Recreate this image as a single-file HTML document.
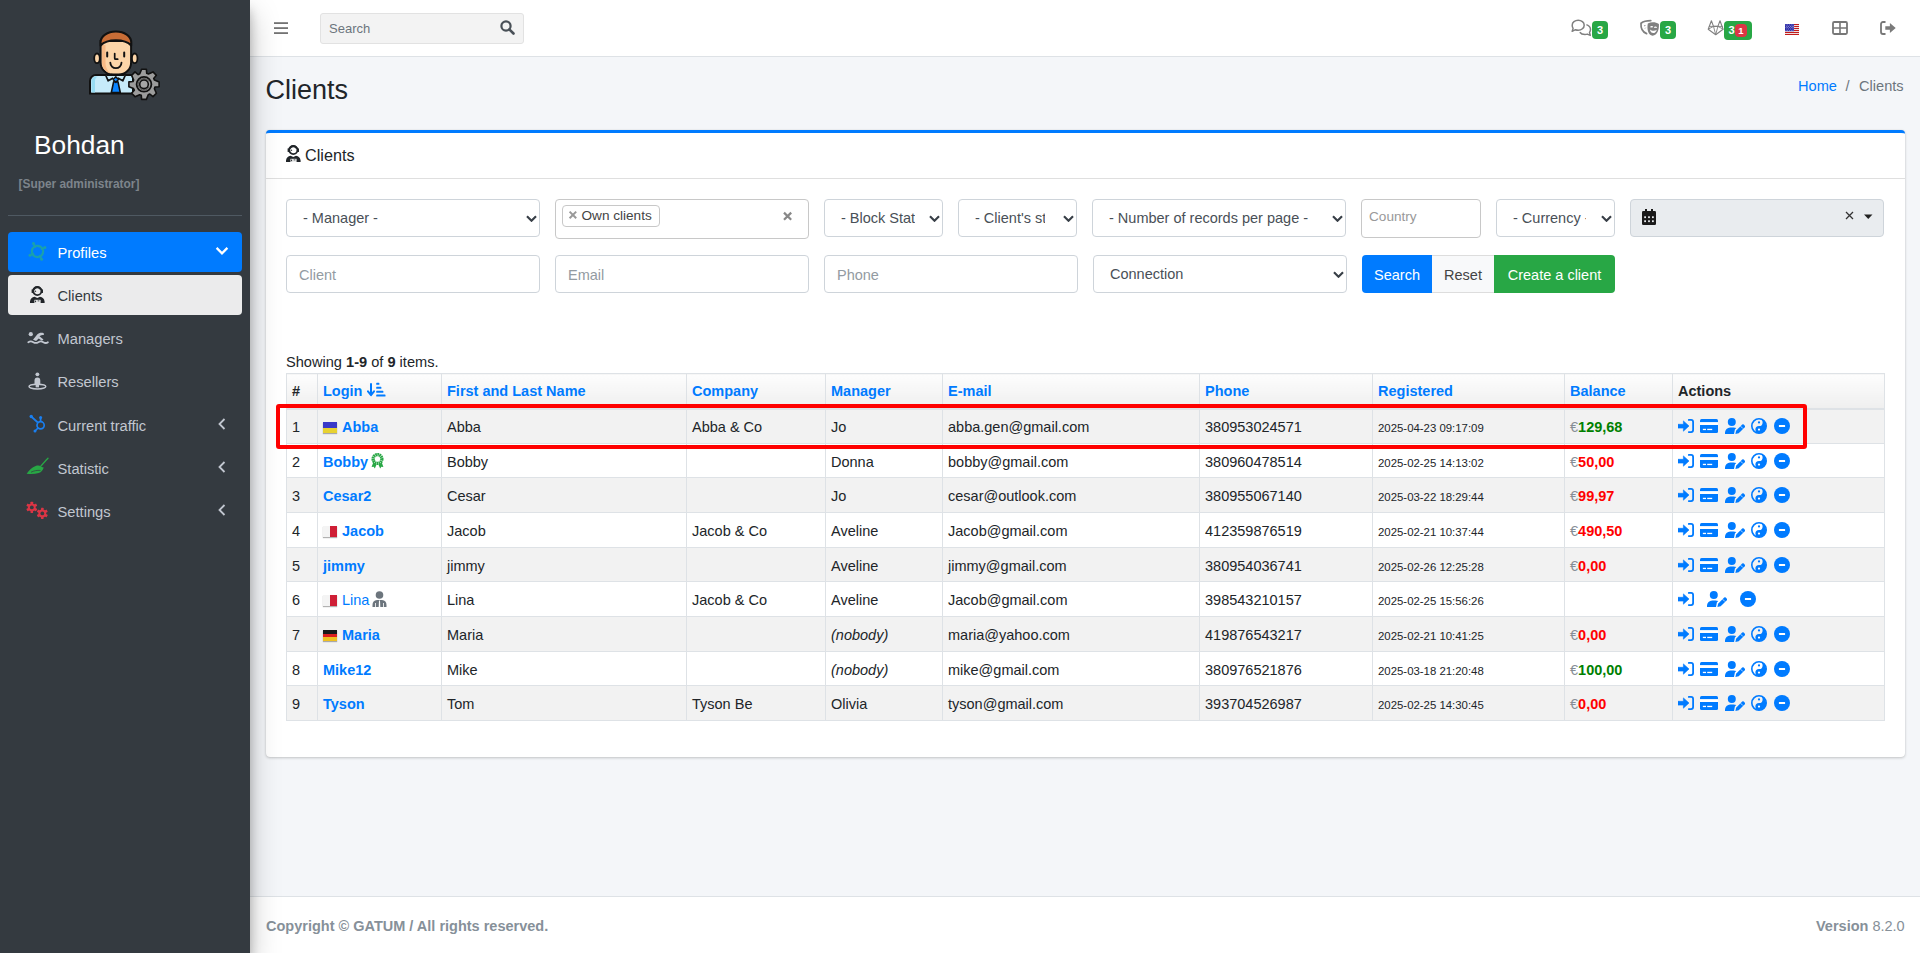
<!DOCTYPE html><html><head><meta charset="utf-8"><title>Clients</title><style>
*{box-sizing:border-box}
html,body{margin:0;padding:0}
body{width:1920px;height:953px;overflow:hidden;background:#f4f6f9;font-family:"Liberation Sans",sans-serif;color:#212529;position:relative;font-size:14.5px}
.a{position:absolute;white-space:nowrap}
#sidebar{position:absolute;left:0;top:0;width:250px;height:953px;background:#343a40;z-index:10;box-shadow:0 14px 28px rgba(0,0,0,.25),0 10px 10px rgba(0,0,0,.22)}
#navbar{position:absolute;left:250px;top:0;width:1670px;height:57px;background:#fff;border-bottom:1px solid #dee2e6}
#footer{position:absolute;left:250px;top:896px;width:1670px;height:57px;background:#fff;border-top:1px solid #dee2e6;color:#869099}
.ni{position:absolute;left:8px;width:234px;height:40px;border-radius:4px;color:#c2c7d0;font-size:14.7px}
.ni .t{position:absolute;left:49.5px;top:13px;line-height:16px;white-space:nowrap}
.ni svg{position:absolute}
.card{position:absolute;left:266px;top:130px;width:1639px;height:627px;background:#fff;border-top:3px solid #007bff;border-radius:4px;box-shadow:0 0 1px rgba(0,0,0,.125),0 1px 3px rgba(0,0,0,.2)}
.fc{position:absolute;height:38px;border:1px solid #ced4da;border-radius:4px;background:#fff;color:#495057;font-size:14.5px;white-space:nowrap;overflow:hidden}
.fc .t{position:absolute;top:10px;line-height:16px}
.ph{color:#939ba2}
.chev{position:absolute;top:15px}
table.grid{position:absolute;left:286px;top:373px;width:1599px;border-collapse:collapse;table-layout:fixed;font-size:14.5px}
.grid td,.grid th{border:1px solid #dee2e6;padding:2px 0 0 5px;height:34.68px;white-space:nowrap;overflow:hidden;text-align:left;vertical-align:middle}
.grid th{height:35px;padding-top:0;border-bottom:2px solid #dee2e6;background:linear-gradient(#fdfdfd,#efefef);font-weight:bold;color:#007bff}
.grid th.k{color:#212529}
.grid tr.s td{background:#f2f2f2}
.grid a{color:#007bff;text-decoration:none;font-weight:bold}
.grid a.n{font-weight:normal}
.flag{display:inline-block;width:14px;height:11px;vertical-align:-1px;margin-right:5px;box-shadow:0 1px 1px rgba(0,0,0,.3)}
.reg{font-size:11.4px}
.eu{color:#868e96}
.gr{color:#008000;font-weight:bold}
.rd{color:#ff0000;font-weight:bold}
.acts svg{vertical-align:middle;position:relative;top:-1.4px}
.badge{position:absolute;background:#28a745;color:#fff;font-weight:bold;font-size:10.5px;border-radius:4px;text-align:center;line-height:18px}
</style></head><body><svg width="0" height="0" style="position:absolute"><defs>
<symbol id="i-signin" viewBox="0 0 16 14"><path d="M10.8 .9h2.3a2 2 0 0 1 2 2v8.2a2 2 0 0 1-2 2h-2.3" fill="none" stroke="#007bff" stroke-width="1.8" stroke-linecap="round"/><path d="M0 5.3h5.4V1.9L11 7l-5.6 5.2V9.1H0z" fill="#007bff" stroke="#007bff" stroke-width=".6" stroke-linejoin="round"/></symbol>
<symbol id="i-card" viewBox="0 0 18 14"><rect x="0" y="0" width="18" height="14" rx="1.5" fill="#007bff"/><rect x="0" y="3.1" width="18" height="2.9" fill="#fff"/><rect x="2.85" y="9.8" width="3.15" height="1.3" fill="#fff"/><rect x="7.2" y="9.8" width="5" height="1.3" fill="#fff"/></symbol>
<symbol id="i-uedit" viewBox="0 0 20 16"><circle cx="6.8" cy="4.1" r="4" fill="#007bff"/><path d="M0 16v-1.4A5.2 5.2 0 0 1 5.2 9.4h3.4a5.2 5.2 0 0 1 2.6.7L9.9 11.4l-.9 4.6z" fill="#007bff"/><path d="M10.4 16l.7-3.3 6.1-6.1a1.1 1.1 0 0 1 1.55 0l1.05 1.05a1.1 1.1 0 0 1 0 1.55L13.7 15.3z" fill="#007bff"/><path d="M15.6 8.2l2.3 2.3" stroke="#fff" stroke-width=".7"/></symbol>
<symbol id="i-yy" viewBox="0 0 16 16"><circle cx="8" cy="8" r="7.2" fill="none" stroke="#007bff" stroke-width="1.6"/><path d="M8 0.8a7.2 7.2 0 0 1 0 14.4a3.6 3.6 0 0 1 0-7.2a3.6 3.6 0 0 0 0-7.2z" fill="#007bff"/><circle cx="8" cy="4.4" r="1.1" fill="#007bff"/><circle cx="8" cy="11.6" r="1.1" fill="#fff"/></symbol>
<symbol id="i-minus" viewBox="0 0 16 16"><circle cx="8" cy="8" r="8" fill="#007bff"/><rect x="4.9" y="6.95" width="6.2" height="2.1" rx=".4" fill="#fff"/></symbol>
<symbol id="i-chev" viewBox="0 0 11 7"><path d="M1 1.2l4.5 4.5 4.5-4.5" fill="none" stroke="#3a4149" stroke-width="2.2"/></symbol>
<symbol id="i-client" viewBox="0 0 16 18"><circle cx="7.3" cy="5" r="4.1" fill="none" stroke="#212529" stroke-width="1.8"/><path d="M3.6 3.4A4.3 4.3 0 0 1 11 3.4" fill="none" stroke="#212529" stroke-width="2"/><rect x="1.6" y="3.2" width="1.4" height="3.8" rx=".6" fill="#212529"/><rect x="11.6" y="3.2" width="1.4" height="3.8" rx=".6" fill="#212529"/><path d="M4.8 4.3l1.6 1-1.6 1z" fill="#212529"/><path d="M0 17v-1.6A5.6 5.6 0 0 1 4.6 10.8l2.7 1.3 2.7-1.3a5.6 5.6 0 0 1 4.6 4.6V17z" fill="#212529"/><rect x="4.4" y="13.8" width="6.2" height="3.2" fill="#eceded"/><rect x="5.1" y="14.6" width="1" height="1.6" fill="#212529"/><rect x="7.6" y="14.5" width="1.8" height=".8" fill="#212529"/></symbol>
</defs></svg><div id="navbar"></div>
<svg class="a" style="left:274px;top:21px" width="14" height="14"><rect y="1.2" width="14" height="1.8" fill="#737373"/><rect y="6.2" width="14" height="1.8" fill="#737373"/><rect y="11.2" width="14" height="1.8" fill="#737373"/></svg>
<div class="a" style="left:320px;top:13px;width:204px;height:31px;background:#f3f3f3;border:1px solid #e2e2e2;border-radius:3px"></div>
<div class="a" style="left:329px;top:20.7px;font-size:13px;line-height:16px;color:#6c757d">Search</div>
<svg class="a" style="left:500px;top:20px" width="15" height="15"><circle cx="6" cy="6" r="4.6" fill="none" stroke="#495057" stroke-width="2.2"/><path d="M9.3 9.3l4.2 4.2" stroke="#495057" stroke-width="2.6" stroke-linecap="round"/></svg>
<svg class="a" style="left:1568px;top:16px" width="24" height="22"><path d="M10.2 4.2c3.3 0 6 2.2 6 5s-2.7 5-6 5c-1 0-1.9-.2-2.7-.5L4.2 15.3l.9-2.9C4.5 11.6 4.2 10.5 4.2 9.2c0-2.8 2.7-5 6-5z" fill="none" stroke="#808080" stroke-width="1.5" stroke-linejoin="round"/><path d="M18.4 8.6c2.4.8 4.1 2.7 4.1 4.9 0 1.1-.4 2.1-1 2.9l.8 3-3-1.3c-.7.2-1.5.3-2.3.3-2.2 0-4.2-.8-5.2-2.2" fill="none" stroke="#808080" stroke-width="1.5" stroke-linejoin="round"/></svg>
<div class="badge" style="left:1592px;top:21px;width:16px;height:18px;font-size:11px">3</div>
<svg class="a" style="left:1636px;top:16px" width="24" height="22"><path d="M5 7.2C7.5 5.3 11 4.6 14.8 4.6M5 7.2c-.3 4.2 1 8.6 5.6 10.4" fill="none" stroke="#808080" stroke-width="1.7" stroke-linecap="round"/><path d="M8.2 9.8l1.2-.3M9.1 12.4l.5-.6" stroke="#808080" stroke-width="1"/><path d="M11.8 7.4c3.4-1.8 7.9-1.7 11.1.6.4 5.9-1.5 10.9-6.3 11.8-4.3-.9-5.9-6.2-4.8-12.4z" fill="#808080"/><path d="M14.6 11.4c.5-.9 1.6-1 2.2-.2M18.3 11.6c.6-.8 1.8-.7 2.3.1" fill="none" stroke="#fff" stroke-width="1.2"/><path d="M13.9 13.5c1.8 1.6 5 1.9 6.9.2-.6 2.2-2.1 3.4-3.6 3.4-1.6 0-2.9-1.3-3.3-3.6z" fill="#fff"/></svg>
<div class="badge" style="left:1660px;top:21px;width:16px;height:18px;font-size:11px">3</div>
<svg class="a" style="left:1704px;top:16px" width="20" height="22"><path d="M11.7 18.7L4.2 13.2 7.4 4.7l2.1 5.7h4.4l2.1-5.7 3.1 8.5z" fill="none" stroke="#808080" stroke-width="1.1" stroke-linejoin="round"/><path d="M4.9 10.4h13.9M9.5 10.4l2.2 8.3 2.2-8.3M4.2 13.2l5.3-2.8M19.2 13.2l-5.3-2.8" fill="none" stroke="#808080" stroke-width=".9"/></svg>
<div class="badge" style="left:1724px;top:21px;width:28px;height:19px;text-align:left;padding-left:4.5px;font-size:11px;line-height:19px">3</div>
<div class="a" style="left:1735px;top:24px;width:12px;height:13px;background:#dc3545;border-radius:4px;color:#fff;font-weight:bold;font-size:9.5px;line-height:13px;text-align:center">1</div>
<svg class="a" style="left:1785px;top:24px" width="14" height="11"><rect width="14" height="11" fill="#f4f4f4"/><rect y="0" width="14" height="1.1" fill="#c21b1b"/><rect y="2" width="14" height="1.1" fill="#c21b1b"/><rect y="4" width="14" height="1.1" fill="#c21b1b"/><rect y="6" width="14" height="1.1" fill="#c21b1b"/><rect y="8" width="14" height="1.1" fill="#c21b1b"/><rect y="10" width="14" height="1.1" fill="#c21b1b"/><rect width="9" height="7.2" fill="#2a2aa8"/><circle cx="1.00" cy="0.90" r=".42" fill="#fff"/><circle cx="2.75" cy="0.90" r=".42" fill="#fff"/><circle cx="4.50" cy="0.90" r=".42" fill="#fff"/><circle cx="6.25" cy="0.90" r=".42" fill="#fff"/><circle cx="8.00" cy="0.90" r=".42" fill="#fff"/><circle cx="1.87" cy="2.25" r=".42" fill="#fff"/><circle cx="3.62" cy="2.25" r=".42" fill="#fff"/><circle cx="5.37" cy="2.25" r=".42" fill="#fff"/><circle cx="7.12" cy="2.25" r=".42" fill="#fff"/><circle cx="8.87" cy="2.25" r=".42" fill="#fff"/><circle cx="1.00" cy="3.60" r=".42" fill="#fff"/><circle cx="2.75" cy="3.60" r=".42" fill="#fff"/><circle cx="4.50" cy="3.60" r=".42" fill="#fff"/><circle cx="6.25" cy="3.60" r=".42" fill="#fff"/><circle cx="8.00" cy="3.60" r=".42" fill="#fff"/><circle cx="1.87" cy="4.95" r=".42" fill="#fff"/><circle cx="3.62" cy="4.95" r=".42" fill="#fff"/><circle cx="5.37" cy="4.95" r=".42" fill="#fff"/><circle cx="7.12" cy="4.95" r=".42" fill="#fff"/><circle cx="8.87" cy="4.95" r=".42" fill="#fff"/><circle cx="1.00" cy="6.30" r=".42" fill="#fff"/><circle cx="2.75" cy="6.30" r=".42" fill="#fff"/><circle cx="4.50" cy="6.30" r=".42" fill="#fff"/><circle cx="6.25" cy="6.30" r=".42" fill="#fff"/><circle cx="8.00" cy="6.30" r=".42" fill="#fff"/></svg>
<svg class="a" style="left:1832px;top:21px" width="16" height="14"><rect x="1" y="1" width="14" height="12" rx="1.2" fill="none" stroke="#777" stroke-width="1.8"/><path d="M8 1v12M1 7h14" stroke="#777" stroke-width="1.6"/></svg>
<svg class="a" style="left:1880px;top:21px" width="16" height="14"><path d="M5.5 1H3A2 2 0 0 0 1 3v8a2 2 0 0 0 2 2h2.5" fill="none" stroke="#777" stroke-width="1.8"/><path d="M5.3 5.3h4.6V2l5.8 5-5.8 5V8.8H5.3z" fill="#7a7a7a"/></svg>
<div class="a" style="left:265.5px;top:74px;font-size:27px;line-height:32px;color:#212529">Clients</div>
<div class="a" style="left:1798px;top:78px;font-size:14.6px;line-height:16px;color:#6c757d"><span style="color:#007bff">Home</span><span style="padding:0 9.5px 0 8.5px">/</span>Clients</div>
<div class="card"></div>
<div class="a" style="left:266px;top:178px;width:1639px;height:1px;background:rgba(0,0,0,.125)"></div>
<svg class="a" style="left:286px;top:145px" width="16" height="18" ><use href="#i-client"/></svg>
<div class="a" style="left:305px;top:146px;font-size:16.2px;line-height:18px;color:#212529">Clients</div>
<div class="fc" style="left:286px;top:199px;width:254px"><span class="t" style="left:16px">- Manager -</span><svg class="chev" style="left:239px" width="11" height="7"><use href="#i-chev"/></svg></div>
<div class="fc" style="left:555px;top:199px;width:254px;height:39.5px;border-color:#c8c8c8"></div>
<div class="a" style="left:562px;top:205px;width:98px;height:22px;background:#fff;border:1px solid #c8c8c8;border-radius:4px;font-size:13.6px;line-height:20px;color:#444;padding-left:18.5px">Own clients</div>
<svg class="a" style="left:568px;top:210px" width="10" height="10"><path d="M1.6 1.6l6.6 6.6M8.2 1.6L1.6 8.2" stroke="#999" stroke-width="2"/></svg>
<svg class="a" style="left:782px;top:211px" width="12" height="11"><path d="M2 1.6l7.2 7.2M9.2 1.6L2 8.8" stroke="#888" stroke-width="2.2"/></svg>
<div class="fc" style="left:824px;top:199px;width:119px"><span class="t" style="left:16px;width:74px;overflow:hidden">- Block Status -</span><svg class="chev" style="left:104px" width="11" height="7"><use href="#i-chev"/></svg></div>
<div class="fc" style="left:958px;top:199px;width:119px"><span class="t" style="left:16px;width:70px;overflow:hidden">- Client's status -</span><svg class="chev" style="left:104px" width="11" height="7"><use href="#i-chev"/></svg></div>
<div class="fc" style="left:1092px;top:199px;width:254px"><span class="t" style="left:16px">- Number of records per page -</span><svg class="chev" style="left:239px" width="11" height="7"><use href="#i-chev"/></svg></div>
<div class="fc" style="left:1361px;top:199px;width:120px;height:39px;border-color:#c8c8c8"><span class="t" style="left:7px;top:9px;color:#999;font-size:13.6px">Country</span></div>
<div class="fc" style="left:1496px;top:199px;width:119px"><span class="t" style="left:16px;width:73px;overflow:hidden">- Currency -</span><svg class="chev" style="left:104px" width="11" height="7"><use href="#i-chev"/></svg></div>
<div class="fc" style="left:1630px;top:199px;width:254px;height:38px;background:#e9ecef"></div>
<svg class="a" style="left:1642px;top:209px" width="14" height="16"><rect x="0" y="2" width="14" height="14" rx="1.3" fill="#1a1a1a"/><rect x="3" y="0" width="2" height="4" fill="#1a1a1a"/><rect x="9" y="0" width="2" height="4" fill="#1a1a1a"/><rect x="2.2" y="7.3" width="1.8" height="1.8" fill="#e9ecef"/><rect x="2.2" y="11.3" width="1.8" height="1.8" fill="#e9ecef"/><rect x="6.1" y="7.3" width="1.8" height="1.8" fill="#e9ecef"/><rect x="6.1" y="11.3" width="1.8" height="1.8" fill="#e9ecef"/><rect x="10.0" y="7.3" width="1.8" height="1.8" fill="#e9ecef"/><rect x="10.0" y="11.3" width="1.8" height="1.8" fill="#e9ecef"/></svg>
<svg class="a" style="left:1845px;top:211px" width="9" height="9"><path d="M1 1l7 7M8 1L1 8" stroke="#333" stroke-width="1.3"/></svg>
<svg class="a" style="left:1864px;top:214px" width="9" height="6"><path d="M0 0.5h8.5L4.25 5z" fill="#222"/></svg>
<div class="fc" style="left:286px;top:255px;width:254px"><span class="t ph" style="left:12px;top:11px">Client</span></div>
<div class="fc" style="left:555px;top:255px;width:254px"><span class="t ph" style="left:12px;top:11px">Email</span></div>
<div class="fc" style="left:824px;top:255px;width:254px"><span class="t ph" style="left:12px;top:11px">Phone</span></div>
<div class="fc" style="left:1093px;top:255px;width:254px"><span class="t" style="left:16px">Connection</span><svg class="chev" style="left:239px" width="11" height="7"><use href="#i-chev"/></svg></div>
<div class="a" style="left:1362px;top:255px;width:70px;height:38px;background:#007bff;border-radius:4px 0 0 4px;color:#fff;font-size:14.5px;line-height:40px;text-align:center">Search</div>
<div class="a" style="left:1432px;top:255px;width:62px;height:38px;background:#f8f9fa;border:1px solid #ddd;border-left:0;border-right:0;color:#444;font-size:14.5px;line-height:38px;text-align:center">Reset</div>
<div class="a" style="left:1494px;top:255px;width:121px;height:38px;background:#28a745;border-radius:0 4px 4px 0;color:#fff;font-size:14.5px;line-height:40px;text-align:center">Create a client</div>
<div class="a" style="left:286px;top:353px;font-size:14.6px;line-height:18px">Showing <b>1-9</b> of <b>9</b> items.</div>
<table class="grid"><colgroup><col style="width:31px"><col style="width:124px"><col style="width:245px"><col style="width:139px"><col style="width:117px"><col style="width:257px"><col style="width:173px"><col style="width:192px"><col style="width:108px"><col style="width:212px"></colgroup><tr><th class="k">#</th><th class="">Login <svg width="19" height="15" style="vertical-align:-1.2px;margin-left:0px"><path d="M4 1.2v11.5" stroke="#007bff" stroke-width="2"/><path d="M1 9.4l3 3.7 3-3.7" fill="none" stroke="#007bff" stroke-width="2" stroke-linecap="round" stroke-linejoin="round"/><g fill="#007bff"><rect x="9.2" y=".8" width="3.2" height="2" rx=".6"/><rect x="9.2" y="4.8" width="5.2" height="2" rx=".6"/><rect x="9.2" y="8.8" width="7.2" height="2" rx=".6"/><rect x="9.2" y="12.6" width="9.3" height="2" rx=".6"/></g></svg></th><th class="">First and Last Name</th><th class="">Company</th><th class="">Manager</th><th class="">E-mail</th><th class="">Phone</th><th class="">Registered</th><th class="">Balance</th><th class="k">Actions</th></tr><tr class="s"><td>1</td><td><span class="flag" style="background:linear-gradient(#3a3ac8 50%,#e8d230 50%)"></span><a>Abba</a></td><td>Abba</td><td>Abba &amp; Co</td><td>Jo</td><td>abba.gen@gmail.com</td><td>380953024571</td><td><span class="reg">2025-04-23 09:17:09</span></td><td><span class="eu">&#8364;</span><span class="gr">129,68</span></td><td class=acts><svg width="16" height="14"><use href="#i-signin"/></svg><span style="display:inline-block;width:5.5px"></span><svg width="18" height="14"><use href="#i-card"/></svg><span style="display:inline-block;width:7px"></span><svg width="20" height="16"><use href="#i-uedit"/></svg><span style="display:inline-block;width:6px"></span><svg width="16" height="16"><use href="#i-yy"/></svg><span style="display:inline-block;width:7px"></span><svg width="16" height="16"><use href="#i-minus"/></svg></td></tr><tr class=""><td>2</td><td><a>Bobby</a><svg width="14" height="17" style="vertical-align:0.5px;margin:-4px 0 -4px 3px"><circle cx="6.5" cy="6" r="4.4" fill="none" stroke="#28a745" stroke-width="3.3" stroke-dasharray="1.6 .4"/><path d="M2.2 9.6L.6 14l2.1-.3 1.1 1.9 1.8-4.2zM10.8 9.6l1.6 4.4-2.1-.3-1.1 1.9-1.8-4.2z" fill="#28a745"/></svg></td><td>Bobby</td><td></td><td>Donna</td><td>bobby@gmail.com</td><td>380960478514</td><td><span class="reg">2025-02-25 14:13:02</span></td><td><span class="eu">&#8364;</span><span class="rd">50,00</span></td><td class=acts><svg width="16" height="14"><use href="#i-signin"/></svg><span style="display:inline-block;width:5.5px"></span><svg width="18" height="14"><use href="#i-card"/></svg><span style="display:inline-block;width:7px"></span><svg width="20" height="16"><use href="#i-uedit"/></svg><span style="display:inline-block;width:6px"></span><svg width="16" height="16"><use href="#i-yy"/></svg><span style="display:inline-block;width:7px"></span><svg width="16" height="16"><use href="#i-minus"/></svg></td></tr><tr class="s"><td>3</td><td><a>Cesar2</a></td><td>Cesar</td><td></td><td>Jo</td><td>cesar@outlook.com</td><td>380955067140</td><td><span class="reg">2025-03-22 18:29:44</span></td><td><span class="eu">&#8364;</span><span class="rd">99,97</span></td><td class=acts><svg width="16" height="14"><use href="#i-signin"/></svg><span style="display:inline-block;width:5.5px"></span><svg width="18" height="14"><use href="#i-card"/></svg><span style="display:inline-block;width:7px"></span><svg width="20" height="16"><use href="#i-uedit"/></svg><span style="display:inline-block;width:6px"></span><svg width="16" height="16"><use href="#i-yy"/></svg><span style="display:inline-block;width:7px"></span><svg width="16" height="16"><use href="#i-minus"/></svg></td></tr><tr class=""><td>4</td><td><span class="flag" style="background:linear-gradient(90deg,#f4f4f4 50%,#cf1f36 50%)"></span><a>Jacob</a></td><td>Jacob</td><td>Jacob &amp; Co</td><td>Aveline</td><td>Jacob@gmail.com</td><td>412359876519</td><td><span class="reg">2025-02-21 10:37:44</span></td><td><span class="eu">&#8364;</span><span class="rd">490,50</span></td><td class=acts><svg width="16" height="14"><use href="#i-signin"/></svg><span style="display:inline-block;width:5.5px"></span><svg width="18" height="14"><use href="#i-card"/></svg><span style="display:inline-block;width:7px"></span><svg width="20" height="16"><use href="#i-uedit"/></svg><span style="display:inline-block;width:6px"></span><svg width="16" height="16"><use href="#i-yy"/></svg><span style="display:inline-block;width:7px"></span><svg width="16" height="16"><use href="#i-minus"/></svg></td></tr><tr class="s"><td>5</td><td><a>jimmy</a></td><td>jimmy</td><td></td><td>Aveline</td><td>jimmy@gmail.com</td><td>380954036741</td><td><span class="reg">2025-02-26 12:25:28</span></td><td><span class="eu">&#8364;</span><span class="rd">0,00</span></td><td class=acts><svg width="16" height="14"><use href="#i-signin"/></svg><span style="display:inline-block;width:5.5px"></span><svg width="18" height="14"><use href="#i-card"/></svg><span style="display:inline-block;width:7px"></span><svg width="20" height="16"><use href="#i-uedit"/></svg><span style="display:inline-block;width:6px"></span><svg width="16" height="16"><use href="#i-yy"/></svg><span style="display:inline-block;width:7px"></span><svg width="16" height="16"><use href="#i-minus"/></svg></td></tr><tr class=""><td>6</td><td><span class="flag" style="background:linear-gradient(90deg,#f4f4f4 50%,#cf1f36 50%)"></span><a class="n">Lina</a><svg width="15" height="16" style="vertical-align:2px;margin:-4px 0 -4px 3px"><circle cx="7.5" cy="4" r="3.8" fill="#6c757d"/><path d="M0.5 16v-2A5 5 0 0 1 5 9h5a5 5 0 0 1 4.5 5v2z" fill="#6c757d"/><path d="M7 9.5h1l.3 6.5h-1.6z" fill="#fff"/><path d="M3.5 12v4M11.5 12v4" stroke="#fff" stroke-width=".8"/></svg></td><td>Lina</td><td>Jacob &amp; Co</td><td>Aveline</td><td>Jacob@gmail.com</td><td>398543210157</td><td><span class="reg">2025-02-25 15:56:26</span></td><td></td><td class=acts><svg width="16" height="14"><use href="#i-signin"/></svg><span style="display:inline-block;width:12.5px"></span><svg width="20" height="16"><use href="#i-uedit"/></svg><span style="display:inline-block;width:13px"></span><svg width="16" height="16"><use href="#i-minus"/></svg></td></tr><tr class="s"><td>7</td><td><span class="flag" style="background:linear-gradient(#1a1a1a 33%,#dd1f1f 33%,#dd1f1f 66%,#f0c020 66%)"></span><a>Maria</a></td><td>Maria</td><td></td><td><i>(nobody)</i></td><td>maria@yahoo.com</td><td>419876543217</td><td><span class="reg">2025-02-21 10:41:25</span></td><td><span class="eu">&#8364;</span><span class="rd">0,00</span></td><td class=acts><svg width="16" height="14"><use href="#i-signin"/></svg><span style="display:inline-block;width:5.5px"></span><svg width="18" height="14"><use href="#i-card"/></svg><span style="display:inline-block;width:7px"></span><svg width="20" height="16"><use href="#i-uedit"/></svg><span style="display:inline-block;width:6px"></span><svg width="16" height="16"><use href="#i-yy"/></svg><span style="display:inline-block;width:7px"></span><svg width="16" height="16"><use href="#i-minus"/></svg></td></tr><tr class=""><td>8</td><td><a>Mike12</a></td><td>Mike</td><td></td><td><i>(nobody)</i></td><td>mike@gmail.com</td><td>380976521876</td><td><span class="reg">2025-03-18 21:20:48</span></td><td><span class="eu">&#8364;</span><span class="gr">100,00</span></td><td class=acts><svg width="16" height="14"><use href="#i-signin"/></svg><span style="display:inline-block;width:5.5px"></span><svg width="18" height="14"><use href="#i-card"/></svg><span style="display:inline-block;width:7px"></span><svg width="20" height="16"><use href="#i-uedit"/></svg><span style="display:inline-block;width:6px"></span><svg width="16" height="16"><use href="#i-yy"/></svg><span style="display:inline-block;width:7px"></span><svg width="16" height="16"><use href="#i-minus"/></svg></td></tr><tr class="s"><td>9</td><td><a>Tyson</a></td><td>Tom</td><td>Tyson Be</td><td>Olivia</td><td>tyson@gmail.com</td><td>393704526987</td><td><span class="reg">2025-02-25 14:30:45</span></td><td><span class="eu">&#8364;</span><span class="rd">0,00</span></td><td class=acts><svg width="16" height="14"><use href="#i-signin"/></svg><span style="display:inline-block;width:5.5px"></span><svg width="18" height="14"><use href="#i-card"/></svg><span style="display:inline-block;width:7px"></span><svg width="20" height="16"><use href="#i-uedit"/></svg><span style="display:inline-block;width:6px"></span><svg width="16" height="16"><use href="#i-yy"/></svg><span style="display:inline-block;width:7px"></span><svg width="16" height="16"><use href="#i-minus"/></svg></td></tr></table>
<div class="a" style="left:276px;top:404px;width:1531px;height:45px;border:4px solid #ff0000;border-radius:3px"></div>
<div id="footer"></div>
<div class="a" style="left:266px;top:917px;font-size:14.5px;line-height:18px;color:#869099;font-weight:bold">Copyright &#169; GATUM / All rights reserved.</div>
<div class="a" style="left:1816px;top:917px;font-size:14.5px;line-height:18px;color:#869099"><b>Version</b> 8.2.0</div>
<div id="sidebar"><svg class="a" style="left:84px;top:26px" width="82" height="78" viewBox="84 26 82 78">
<path d="M90 93.5V81a6 6 0 0 1 6-6h37v18.5z" fill="#c6ebfa" stroke="#111" stroke-width="2"/>
<path d="M91.5 92.5V81.5a5 5 0 0 1 4-5h2.5a5 5 0 0 0-3 5v11z" fill="#97dcf3"/>
<path d="M113.6 81.8l-2.3 10.8h9l-2.3-10.8z" fill="#0a84ff" stroke="#111" stroke-width="1.6" stroke-linejoin="round"/>
<path d="M115.8 76.8l2.6 2.8-2.6 2.8-2.6-2.8z" fill="#0a84ff" stroke="#111" stroke-width="1.5" stroke-linejoin="round"/>
<path d="M105.8 75.5l2.4 5.3 5-2.8M125.2 75.5l-2.4 5.3-5-2.8" fill="#c6ebfa" stroke="#111" stroke-width="1.7" stroke-linejoin="round"/>
<ellipse cx="97" cy="58.3" rx="2.8" ry="4.8" fill="#fcd5a8" stroke="#111" stroke-width="1.8"/>
<ellipse cx="134.7" cy="58.3" rx="2.8" ry="4.8" fill="#fcd5a8" stroke="#111" stroke-width="1.8"/>
<path d="M100.6 44v18.5a12.5 12.2 0 0 0 25 0M100.6 44" fill="#fcd5a8"/>
<path d="M100.6 41h30.5v21.5c0 6.7-5.6 12.1-12.5 12.1h-5.5c-6.9 0-12.5-5.4-12.5-12.1z" fill="#fcd5a8" stroke="#111" stroke-width="2"/>
<path d="M102 45v17.5c0 5.5 3.8 10 9 11.2-3.2-2.2-5.5-6-5.5-11.2V45z" fill="#f7b985"/>
<path d="M100.6 45.5v-3.2c0-6 6.8-10.8 15.3-10.8s15.3 4.8 15.3 10.8v3.2c-3-3.2-8.5-5.2-15.3-5.2s-12.3 2-15.3 5.2z" fill="#c86d36" stroke="#111" stroke-width="2" stroke-linejoin="round"/>
<path d="M107.2 52.6v4M124.2 52.6v4" stroke="#111" stroke-width="2" stroke-linecap="round"/>
<path d="M114.7 53.6v4.6c0 .6.4 1 1 1h2" fill="none" stroke="#111" stroke-width="1.7" stroke-linecap="round"/>
<path d="M110.3 62.6a5.6 5.6 0 0 0 11.2 0" fill="none" stroke="#111" stroke-width="1.8" stroke-linecap="round"/>
<path d="M139.77 73.82 L141.61 69.19 L146.39 69.19 L146.73 73.34 L148.42 73.90 L152.99 71.92 L156.38 75.31 L153.69 78.48 L154.48 80.07 L159.11 81.91 L159.11 86.69 L154.96 87.03 L154.40 88.72 L156.38 93.29 L152.99 96.68 L149.82 93.99 L148.23 94.78 L146.39 99.41 L141.61 99.41 L141.27 95.26 L139.58 94.70 L135.01 96.68 L131.62 93.29 L134.31 90.12 L133.52 88.53 L128.89 86.69 L128.89 81.91 L133.04 81.57 L133.60 79.88 L131.62 75.31 L135.01 71.92 L138.18 74.61z" fill="#9c9c9c" stroke="#111" stroke-width="1.6" stroke-linejoin="round"/>
<circle cx="144" cy="84.3" r="7.4" fill="none" stroke="#111" stroke-width="1.8"/>
<path d="M149.20 81.80A5.8 5.8 0 1 0 149.20 86.80" fill="none" stroke="#555" stroke-width="1"/>
<circle cx="144" cy="84.3" r="4.3" fill="#a6a6a6" stroke="#111" stroke-width="1.6"/>
</svg><div class="a" style="left:34px;top:130.7px;font-size:26.3px;line-height:28px;color:#fff">Bohdan</div><div class="a" style="left:18.5px;top:176px;font-size:11.9px;line-height:16px;color:#7d848b;font-weight:bold">[Super administrator]</div><div class="a" style="left:8px;top:215px;width:234px;height:1px;background:#4f5962"></div><div class="ni" style="top:232px;background:#007bff;color:#fff;"><span class="t">Profiles</span></div><div class="ni" style="top:275px;background:rgba(255,255,255,.9);color:#343a40;"><span class="t">Clients</span></div><div class="ni" style="top:318px;"><span class="t">Managers</span></div><div class="ni" style="top:361px;"><span class="t">Resellers</span></div><div class="ni" style="top:405px;"><span class="t">Current traffic</span></div><div class="ni" style="top:448px;"><span class="t">Statistic</span></div><div class="ni" style="top:491px;"><span class="t">Settings</span></div><svg class="a" style="left:20px;top:236px" width="36" height="30" viewBox="20 236 36 30"><g fill="none" stroke="#1aa0ad" stroke-width="2.2" stroke-linecap="round"><path d="M36.72 245.85A5.6 5.6 0 0 1 42.53 248.95"/><path d="M43.05 250.62A5.6 5.6 0 0 1 39.95 256.43"/><path d="M38.28 256.95A5.6 5.6 0 0 1 32.47 253.85"/><path d="M31.95 252.18A5.6 5.6 0 0 1 35.05 246.37"/><path d="M35.17 246.86L33.50 243.60"/><path d="M42.04 249.07L44.90 247.60"/><path d="M39.87 255.91L41.60 259.20"/><path d="M32.95 253.71L30.00 255.20"/></g><g fill="#1aa0ad"><circle cx="33.5" cy="243.6" r="1.5"/><circle cx="44.9" cy="247.6" r="1.5"/><circle cx="41.6" cy="259.2" r="1.5"/><circle cx="30.0" cy="255.2" r="1.5"/></g></svg><svg class="a" style="left:30px;top:286px" width="16" height="18"><use href="#i-client"/></svg><svg class="a" style="left:26px;top:329px" width="24" height="17" viewBox="26 329 24 17"><circle cx="30.8" cy="334.2" r="2.1" fill="#c2c7d0"/><path d="M33 339.8l4.2-5.2c1.6-1.7 4-2.2 6.5-1.4l.4 1.5c-2 .2-3.6.6-4.6 1.5l4 3.4-1.6 1.2-3.2-2.3-2.6 2.4z" fill="#c2c7d0"/><path d="M28.3 342.2c1.7-1 3.3-1 5 0s3.3 1 5 0 3.3-1 5 0 3.3 1 4.6 0" fill="none" stroke="#c2c7d0" stroke-width="1.8" stroke-linecap="round"/></svg><svg class="a" style="left:26px;top:370px" width="24" height="22" viewBox="26 370 24 22"><circle cx="37.4" cy="374.3" r="1.9" fill="#c2c7d0"/><path d="M34.5 380.5a2.9 2.9 0 0 1 5.8 0v3.5h-1.3v3.2h-3.2V384h-1.3z" fill="#c2c7d0"/><ellipse cx="37.4" cy="386.6" rx="8.4" ry="2.4" fill="none" stroke="#c2c7d0" stroke-width="1.4"/><rect x="35.8" y="383" width="3.2" height="4.2" fill="#c2c7d0"/></svg><svg class="a" style="left:26px;top:412px" width="24" height="22" viewBox="26 412 24 22"><g stroke="#1a7ff0" stroke-width="1.7" fill="none"><circle cx="40.6" cy="425.3" r="3.6"/><path d="M31.2 416.5l6.6 6M40.6 421.7v-4.1M38 428l-3 3"/></g><circle cx="31.2" cy="416.5" r="1.7" fill="#1a7ff0"/><circle cx="40.6" cy="417.6" r="1.5" fill="#1a7ff0"/><circle cx="35" cy="431" r="1.5" fill="#1a7ff0"/></svg><svg class="a" style="left:24px;top:456px" width="26" height="20" viewBox="24 456 26 20"><path d="M26.6 473.8c2.6-3.6 5.4-6.5 9-7.8 2.5-.8 4.3-.5 5.3.7l2.8.8c-.6 2.6-2.3 4.5-5 5.6-3.6 1-7.5 1-12.1.7z" fill="#28a745"/><path d="M37.2 470.5c3-3.5 6.5-8 10.8-12.3" fill="none" stroke="#28a745" stroke-width="1.3" stroke-linecap="round"/><path d="M31 472.2c3-1.5 6-2 9.5-1.8" fill="none" stroke="#343a40" stroke-width=".7"/></svg><svg class="a" style="left:24px;top:499px" width="26" height="22" viewBox="24 499 26 22"><g fill="#dc3545"><circle cx="31.8" cy="507.4" r="3.9"/><rect x="30.5" y="501.8" width="2.6" height="2.4" rx=".4" transform="rotate(0 31.8 507.4)"/><rect x="30.5" y="501.8" width="2.6" height="2.4" rx=".4" transform="rotate(60 31.8 507.4)"/><rect x="30.5" y="501.8" width="2.6" height="2.4" rx=".4" transform="rotate(120 31.8 507.4)"/><rect x="30.5" y="501.8" width="2.6" height="2.4" rx=".4" transform="rotate(180 31.8 507.4)"/><rect x="30.5" y="501.8" width="2.6" height="2.4" rx=".4" transform="rotate(240 31.8 507.4)"/><rect x="30.5" y="501.8" width="2.6" height="2.4" rx=".4" transform="rotate(300 31.8 507.4)"/><circle cx="42.3" cy="513.4" r="3.9"/><rect x="41.0" y="507.8" width="2.6" height="2.4" rx=".4" transform="rotate(0 42.3 513.4)"/><rect x="41.0" y="507.8" width="2.6" height="2.4" rx=".4" transform="rotate(60 42.3 513.4)"/><rect x="41.0" y="507.8" width="2.6" height="2.4" rx=".4" transform="rotate(120 42.3 513.4)"/><rect x="41.0" y="507.8" width="2.6" height="2.4" rx=".4" transform="rotate(180 42.3 513.4)"/><rect x="41.0" y="507.8" width="2.6" height="2.4" rx=".4" transform="rotate(240 42.3 513.4)"/><rect x="41.0" y="507.8" width="2.6" height="2.4" rx=".4" transform="rotate(300 42.3 513.4)"/></g><circle cx="31.8" cy="507.4" r="1.9" fill="#343a40"/><circle cx="42.3" cy="513.4" r="1.9" fill="#343a40"/></svg><svg class="a" style="left:215px;top:245.9px" width="14" height="10"><path d="M1.6 1.9l5.4 5.4 5.4-5.4" fill="none" stroke="#fff" stroke-width="2.3"/></svg><svg class="a" style="left:218px;top:418px" width="8" height="12"><path d="M6.5 1L1.5 6l5 5" fill="none" stroke="#c2c7d0" stroke-width="1.8"/></svg><svg class="a" style="left:218px;top:461px" width="8" height="12"><path d="M6.5 1L1.5 6l5 5" fill="none" stroke="#c2c7d0" stroke-width="1.8"/></svg><svg class="a" style="left:218px;top:504px" width="8" height="12"><path d="M6.5 1L1.5 6l5 5" fill="none" stroke="#c2c7d0" stroke-width="1.8"/></svg></div></body></html>
